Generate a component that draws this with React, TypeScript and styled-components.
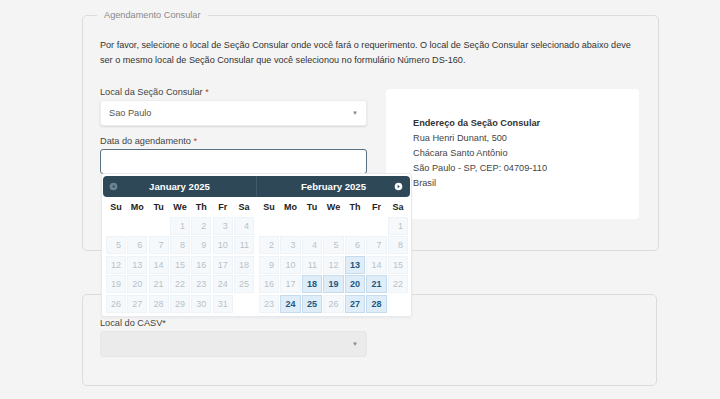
import React from "react";
import styled, { createGlobalStyle } from "styled-components";

const Global = createGlobalStyle`
  html, body { margin: 0; padding: 0; background: #f4f4f4; }
  body { font-family: "Liberation Sans", Arial, sans-serif; color: #333; }
`;

const Page = styled.div`
  width: 720px;
  height: 399px;
  overflow: hidden;
  padding: 9px 0 0 82px;
  box-sizing: border-box;
`;

const Fieldset = styled.fieldset<{ $pb: number; $pt: number }>`
  width: 575px;
  box-sizing: border-box;
  margin: 0;
  border: 1px solid #dcdcdc;
  border-radius: 5px;
  padding: ${(p) => p.$pt}px 19px ${(p) => p.$pb}px 17px;
  & + & { margin-top: 43px; }
`;

const Legend = styled.legend`
  font-size: 9.2px;
  line-height: 12px;
  color: #8a8a8a;
  padding: 0 7px;
  margin-left: -3px;
`;

const Intro = styled.p`
  margin: 0 0 21px 0;
  font-size: 9.1px;
  line-height: 15px;
  color: #333;
  white-space: nowrap;
`;

const Row = styled.div`
  display: flex;
  gap: 19px;
  align-items: flex-start;
`;

const Column = styled.div`
  width: 267px;
  display: flex;
  flex-direction: column;
  position: relative;
  margin-top: -3px;
`;

const Label = styled.label<{ $mt?: number }>`
  font-size: 9.2px;
  line-height: 12px;
  color: #444;
  margin-top: ${(p) => p.$mt ?? 0}px;
  margin-bottom: 2px;
`;

const Req = styled.span`
  color: #c0392b;
`;

const Select = styled.div<{ $disabled?: boolean }>`
  height: 26px;
  box-sizing: border-box;
  border-radius: 3px;
  background: ${(p) => (p.$disabled ? "#ebebeb" : "#fff")};
  box-shadow: ${(p) => (p.$disabled ? "none" : "0 1px 2px rgba(0,0,0,0.12)")};
  border: 1px solid ${(p) => (p.$disabled ? "#e6e6e6" : "#ececec")};
  display: flex;
  align-items: center;
  justify-content: space-between;
  padding: 0 8px;
  font-size: 9.2px;
  color: #555;
`;

const Caret = styled.span`
  font-size: 6px;
  color: #888;
`;

const Input = styled.div`
  height: 25px;
  box-sizing: border-box;
  border: 1px solid #5a7282;
  border-radius: 3px;
  background: #fff;
`;

const Card = styled.div`
  width: 253px;
  height: 130px;
  box-sizing: border-box;
  background: #fff;
  border-radius: 4px;
  padding: 27px 0 0 27px;
  font-size: 9.2px;
  line-height: 15px;
  color: #444;
`;

const CardTitle = styled.div`
  font-weight: bold;
  color: #333;
`;

const Picker = styled.div`
  position: absolute;
  top: calc(100% - 1px);
  left: 1px;
  width: 311px;
  box-sizing: border-box;
  background: #fff;
  border: 1px solid #e4eaef;
  border-radius: 3px;
  padding: 2px 1px 3px 1px;
  display: flex;
  z-index: 5;
  box-shadow: 0 1px 3px rgba(0,0,0,0.05);
`;

const Month = styled.div<{ $w: number }>`
  width: ${(p) => p.$w}px;
`;

const MonthHeader = styled.div<{ $side: "left" | "right" }>`
  height: 21px;
  background: #2e4858;
  border-radius: ${(p) => (p.$side === "left" ? "4px 0 0 4px" : "0 4px 4px 0")};
  border-left: ${(p) => (p.$side === "right" ? "1px solid #3f5a6a" : "none")};
  position: relative;
  display: flex;
  align-items: center;
  justify-content: center;
  color: #fff;
  font-weight: bold;
  font-size: 9.6px;
`;

const NavIcon = styled.svg<{ $side: "left" | "right" }>`
  position: absolute;
  top: 6px;
  ${(p) => (p.$side === "left" ? "left: 6px;" : "right: 7px;")}
`;

const Grid = styled.div`
  display: grid;
  grid-template-columns: repeat(7, 1fr);
  grid-auto-rows: 18px;
  column-gap: 1.4px;
  row-gap: 1.5px;
  padding: 0 2px 0 3px;
`;

const DayName = styled.div`
  height: 20px;
  line-height: 20px;
  text-align: center;
  font-weight: bold;
  font-size: 9px;
  color: #222;
  margin-bottom: -1px;
`;

const Cell = styled.div<{ $state: "empty" | "off" | "on" }>`
  box-sizing: border-box;
  border: 1px solid
    ${(p) => (p.$state === "on" ? "#c6dbeb" : p.$state === "off" ? "#eef3f7" : "transparent")};
  background: ${(p) => (p.$state === "on" ? "#deedf8" : p.$state === "off" ? "#f6f9fc" : "transparent")};
  color: ${(p) => (p.$state === "on" ? "#24577e" : "#b8c1c8")};
  font-weight: ${(p) => (p.$state === "on" ? "bold" : "normal")};
  font-size: 9px;
  line-height: 16px;
  text-align: right;
  padding-right: 4px;
`;

const DAYS = ["Su", "Mo", "Tu", "We", "Th", "Fr", "Sa"];

function Calendar({
  title,
  startDow,
  days,
  available,
  side,
  width,
}: {
  title: string;
  startDow: number;
  days: number;
  available: number[];
  side: "left" | "right";
  width: number;
}) {
  const cells: { n: number | null }[] = [];
  for (let i = 0; i < startDow; i++) cells.push({ n: null });
  for (let d = 1; d <= days; d++) cells.push({ n: d });
  while (cells.length % 7 !== 0) cells.push({ n: null });
  return (
    <Month $w={width}>
      <MonthHeader $side={side}>
        {side === "left" ? (
          <NavIcon $side="left" width="9" height="9" viewBox="0 0 9 9">
            <circle cx="4.5" cy="4.5" r="3.8" fill="#6f8491" />
            <path d="M5.4 2.8 L3.2 4.5 L5.4 6.2 Z" fill="#2e4858" />
          </NavIcon>
        ) : (
          <NavIcon $side="right" width="9" height="9" viewBox="0 0 9 9">
            <circle cx="4.5" cy="4.5" r="3.8" fill="#fff" />
            <path d="M3.6 2.8 L5.8 4.5 L3.6 6.2 Z" fill="#2e4858" />
          </NavIcon>
        )}
        {title}
      </MonthHeader>
      <Grid>
        {DAYS.map((d) => (
          <DayName key={d}>{d}</DayName>
        ))}
        {cells.map((c, i) => (
          <Cell
            key={i}
            $state={c.n === null ? "empty" : available.includes(c.n) ? "on" : "off"}
          >
            {c.n ?? ""}
          </Cell>
        ))}
      </Grid>
    </Month>
  );
}

export default function App() {
  return (
    <>
      <Global />
      <Page>
        <Fieldset $pt={17} $pb={31}>
          <Legend>Agendamento Consular</Legend>
          <Intro>
            Por favor, selecione o local de Seção Consular onde você fará o requerimento. O local de Seção Consular selecionado abaixo deve
            <br />
            ser o mesmo local de Seção Consular que você selecionou no formulário Número DS-160.
          </Intro>
          <Row>
            <Column>
              <Label>
                Local da Seção Consular <Req>*</Req>
              </Label>
              <Select>
                Sao Paulo
                <Caret>▼</Caret>
              </Select>
              <Label $mt={9}>
                Data do agendamento <Req>*</Req>
              </Label>
              <div style={{ position: "relative" }}>
                <Input />
                <Picker>
                  <Calendar
                    title="January 2025"
                    startDow={3}
                    days={31}
                    available={[]}
                    side="left"
                    width={153}
                  />
                  <Calendar
                    title="February 2025"
                    startDow={6}
                    days={28}
                    available={[13, 18, 19, 20, 21, 24, 25, 27, 28]}
                    side="right"
                    width={154}
                  />
                </Picker>
              </div>
            </Column>
            <Card>
              <CardTitle>Endereço da Seção Consular</CardTitle>
              <div>Rua Henri Dunant, 500</div>
              <div>Chácara Santo Antônio</div>
              <div>São Paulo - SP, CEP: 04709-110</div>
              <div>Brasil</div>
            </Card>
          </Row>
        </Fieldset>
        <Fieldset $pt={25} $pb={28}>
          <Column>
            <Label>Local do CASV*</Label>
            <Select $disabled>
              <span />
              <Caret>▼</Caret>
            </Select>
          </Column>
        </Fieldset>
      </Page>
    </>
  );
}
